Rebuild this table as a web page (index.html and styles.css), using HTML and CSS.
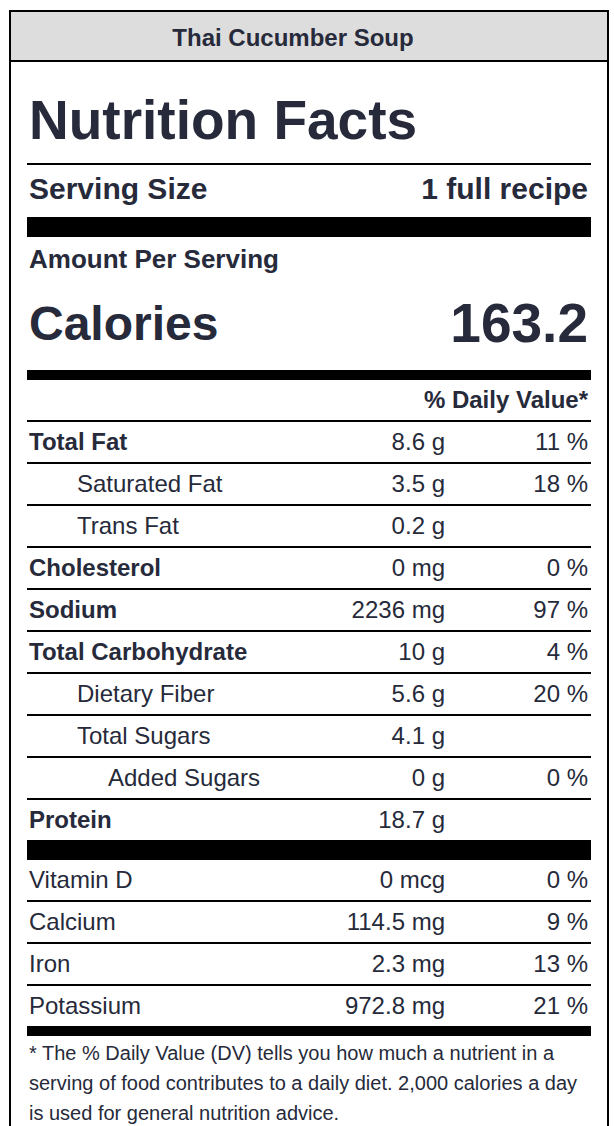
FILE: index.html
```html
<!DOCTYPE html>
<html lang="en">
<head>
<meta charset="utf-8">
<title>Thai Cucumber Soup – Nutrition Facts</title>
<link rel="stylesheet" href="styles.css">
</head>
<body>
<div class="label">
  <div class="label-title">Thai Cucumber Soup</div>
  <div class="label-body">
    <h1 class="nf-title">Nutrition Facts</h1>
    <div class="serving"><span>Serving Size</span><span>1 full recipe</span></div>
    <div class="amount">Amount Per Serving</div>
    <div class="calories"><span class="cal-name">Calories</span><span class="cal-val">163.2</span></div>
    <div class="dv-head">% Daily Value*</div>
    <div class="nutrients">
      <div class="row"><span class="name bold">Total Fat</span><span class="amt">8.6 g</span><span class="pct">11 %</span></div>
      <div class="row"><span class="name sub">Saturated Fat</span><span class="amt">3.5 g</span><span class="pct">18 %</span></div>
      <div class="row"><span class="name sub">Trans Fat</span><span class="amt">0.2 g</span><span class="pct"></span></div>
      <div class="row"><span class="name bold">Cholesterol</span><span class="amt">0 mg</span><span class="pct">0 %</span></div>
      <div class="row"><span class="name bold">Sodium</span><span class="amt">2236 mg</span><span class="pct">97 %</span></div>
      <div class="row"><span class="name bold">Total Carbohydrate</span><span class="amt">10 g</span><span class="pct">4 %</span></div>
      <div class="row"><span class="name sub">Dietary Fiber</span><span class="amt">5.6 g</span><span class="pct">20 %</span></div>
      <div class="row"><span class="name sub">Total Sugars</span><span class="amt">4.1 g</span><span class="pct"></span></div>
      <div class="row"><span class="name subsub">Added Sugars</span><span class="amt">0 g</span><span class="pct">0 %</span></div>
      <div class="row"><span class="name bold">Protein</span><span class="amt">18.7 g</span><span class="pct"></span></div>
    </div>
    <div class="vitamins">
      <div class="row"><span class="name">Vitamin D</span><span class="amt">0 mcg</span><span class="pct">0 %</span></div>
      <div class="row"><span class="name">Calcium</span><span class="amt">114.5 mg</span><span class="pct">9 %</span></div>
      <div class="row"><span class="name">Iron</span><span class="amt">2.3 mg</span><span class="pct">13 %</span></div>
      <div class="row"><span class="name">Potassium</span><span class="amt">972.8 mg</span><span class="pct">21 %</span></div>
    </div>
    <p class="footnote">* The % Daily Value (DV) tells you how much a nutrient in a serving of food contributes to a daily diet. 2,000 calories a day is used for general nutrition advice.</p>
  </div>
</div>
</body>
</html>
```

FILE: styles.css
```css
html, body {
  margin: 0;
  padding: 0;
  background: #fff;
}

body {
  font-family: "Liberation Sans", Arial, Helvetica, sans-serif;
  color: #262a3a;
}

.label {
  box-sizing: border-box;
  width: 600px;
  margin: 10px 0 0 9px;
  border: 2px solid #000;
}

.label-title {
  background: #dddddd;
  border-bottom: 2px solid #000;
  padding: 13px 32px 9px 0;
  font-size: 24px;
  line-height: 26px;
  font-weight: bold;
  text-align: center;
}

.label-body {
  padding: 0 16px;
}

.nf-title {
  margin: 26px 0 0;
  padding: 0 3px 11px 2px;
  border-bottom: 2px solid #000;
  font-size: 55px;
  line-height: 64px;
  font-weight: bold;
}

.serving {
  display: flex;
  justify-content: space-between;
  padding: 6px 3px 10px 2px;
  border-bottom: 20px solid #000;
  font-size: 30px;
  line-height: 36px;
  font-weight: bold;
}

.amount {
  padding: 7px 3px 0 2px;
  font-size: 26px;
  line-height: 30px;
  font-weight: bold;
}

.calories {
  display: flex;
  justify-content: space-between;
  align-items: center;
  padding: 18px 3px 15px 2px;
  border-bottom: 10px solid #000;
  font-weight: bold;
}

.cal-name {
  font-size: 48px;
  line-height: 55px;
}

.cal-val {
  font-size: 55px;
  line-height: 63px;
}

.dv-head {
  padding: 0 3px 0 2px;
  text-align: right;
  font-size: 24px;
  line-height: 40px;
  font-weight: bold;
}

.row {
  display: grid;
  grid-template-columns: 1fr 180px 143px;
  padding: 0 3px 0 2px;
  font-size: 24px;
  line-height: 40px;
  border-top: 2px solid #000;
}

.nutrients {
  border-bottom: 20px solid #000;
}

.vitamins {
  border-bottom: 10px solid #000;
}

.vitamins .row:first-child {
  border-top: none;
}

.name.bold {
  font-weight: bold;
}

.name.sub {
  padding-left: 48px;
}

.name.subsub {
  padding-left: 79px;
}

.amt,
.pct {
  text-align: right;
}

.footnote {
  margin: 2px 0 0;
  padding: 0 3px 0 2px;
  font-size: 20px;
  line-height: 30px;
}
```
